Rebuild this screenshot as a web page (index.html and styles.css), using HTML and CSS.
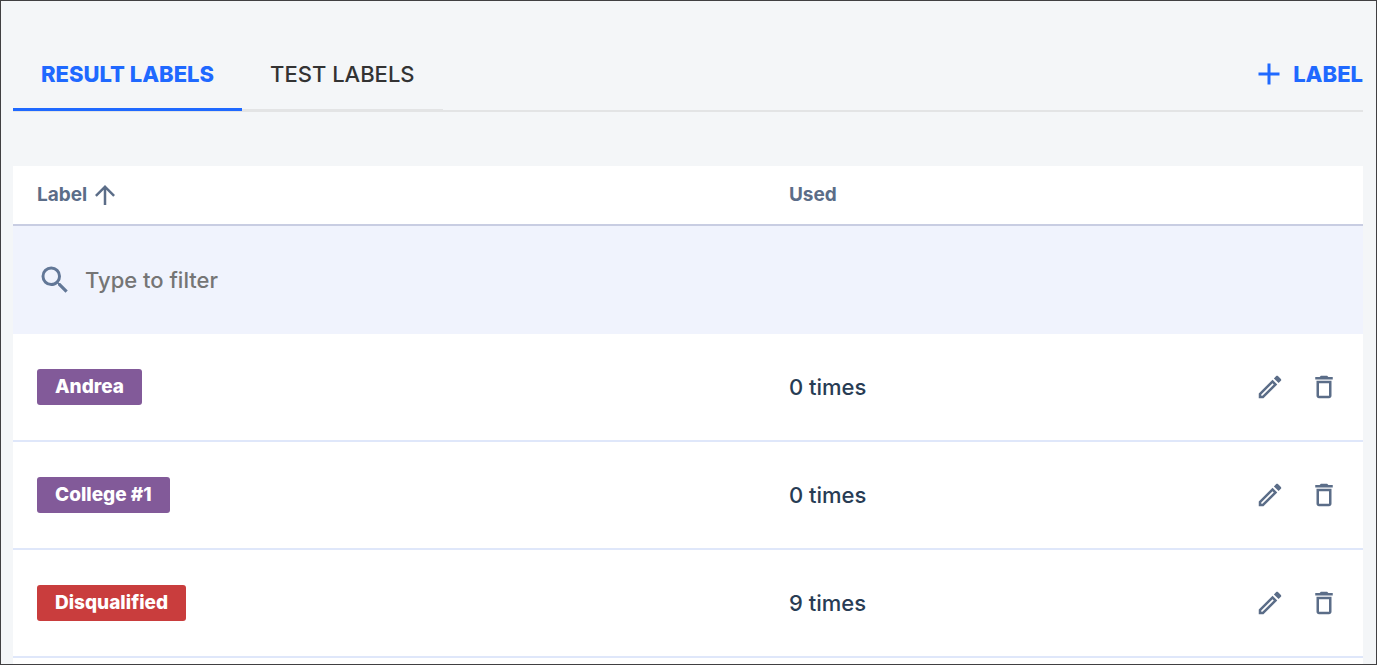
FILE: index.html
```html
<!DOCTYPE html>
<html lang="en">
<head>
  <meta charset="UTF-8">
  <title>Labels</title>
  <link rel="stylesheet" href="styles.css">
</head>
<body>

  <!-- shared icons -->
  <svg class="sprite" aria-hidden="true">
    <symbol id="edit" viewBox="0 0 24 24">
      <path d="M14.06 9.02l.92.92L5.92 19H5v-.92l9.06-9.06M17.66 3c-.25 0-.51.1-.7.29l-1.83 1.83 3.75 3.75 1.83-1.83c.39-.39.39-1.02 0-1.41l-2.34-2.34c-.2-.2-.45-.29-.71-.29zm-3.6 3.19L3 17.25V21h3.75L17.81 9.94l-3.75-3.75z"/>
    </symbol>
    <symbol id="trash" viewBox="0 0 24 24">
      <path d="M6 19c0 1.1.9 2 2 2h8c1.1 0 2-.9 2-2V7H6v12zM8 9h8v10H8V9zm7.5-5l-1-1h-5l-1 1H5v2h14V4z"/>
    </symbol>
  </svg>

  <main class="page">
    <header class="toolbar">
      <nav class="tabs">
        <button class="tab active">RESULT LABELS</button>
        <button class="tab">TEST LABELS</button>
      </nav>
      <button class="add-button">
        <svg class="icon-large" viewBox="0 0 24 24"><path d="M19 13h-6v6h-2v-6H5v-2h6V5h2v6h6v2z"/></svg>
        LABEL
      </button>
    </header>

    <section class="card">
      <table class="labels">
        <thead>
          <tr>
            <th class="col-label">
              <button class="sort">
                Label
                <svg class="icon" viewBox="0 0 24 24"><path d="M4 12l1.41 1.41L11 7.83V20h2V7.83l5.58 5.59L20 12l-8-8-8 8z"/></svg>
              </button>
            </th>
            <th>Used</th>
            <th></th>
          </tr>
        </thead>
        <tbody>
          <tr class="filter-row">
            <td colspan="3">
              <div class="filter">
                <label for="filter" aria-label="Filter labels">
                  <svg class="icon-large" viewBox="0 0 24 24"><path d="M15.5 14h-.79l-.28-.27A6.471 6.471 0 0 0 16 9.5 6.5 6.5 0 1 0 9.5 16c1.61 0 3.09-.59 4.23-1.57l.27.28v.79l5 4.99L20.49 19l-4.99-5zm-6 0C7.01 14 5 11.99 5 9.5S7.01 5 9.5 5 14 7.01 14 9.5 11.99 14 9.5 14z"/></svg>
                </label>
                <input type="text" id="filter" placeholder="Type to filter">
              </div>
            </td>
          </tr>
          <tr>
            <td><span class="tag purple">Andrea</span></td>
            <td>0 times</td>
            <td>
              <div class="actions">
                <button aria-label="Edit"><svg class="icon"><use href="#edit"/></svg></button>
                <button aria-label="Delete"><svg class="icon"><use href="#trash"/></svg></button>
              </div>
            </td>
          </tr>
          <tr>
            <td><span class="tag purple">College #1</span></td>
            <td>0 times</td>
            <td>
              <div class="actions">
                <button aria-label="Edit"><svg class="icon"><use href="#edit"/></svg></button>
                <button aria-label="Delete"><svg class="icon"><use href="#trash"/></svg></button>
              </div>
            </td>
          </tr>
          <tr>
            <td><span class="tag red">Disqualified</span></td>
            <td>9 times</td>
            <td>
              <div class="actions">
                <button aria-label="Edit"><svg class="icon"><use href="#edit"/></svg></button>
                <button aria-label="Delete"><svg class="icon"><use href="#trash"/></svg></button>
              </div>
            </td>
          </tr>
        </tbody>
      </table>
    </section>
  </main>

</body>
</html>
```
FILE: styles.css
```css
* {
  box-sizing: border-box;
}

body {
  margin: 0;
  font-family: Inter, "Open Sans", sans-serif;
  font-size: 22px;
  line-height: 28px;
  color: #283c54;
}

button {
  padding: 0;
  border: none;
  background: none;
  font: inherit;
  color: inherit;
  cursor: pointer;
}

svg {
  display: block;
  fill: currentColor;
}

.sprite {
  position: absolute;
  width: 0;
  height: 0;
}

.icon {
  width: 30px;
  height: 30px;
}

.icon-large {
  width: 36px;
  height: 36px;
}

.page {
  display: flex;
  flex-direction: column;
  min-height: 100vh;
  padding: 36px 13px 0 12px;
  border: 1px solid #414042;
  background-color: #f4f6f8;
}

.toolbar {
  display: flex;
  justify-content: space-between;
  margin-bottom: 54px;
  border-bottom: 2px solid #e3e4e5;
}

.tabs {
  display: flex;
  margin-bottom: -1px;
}

.tab {
  height: 74px;
  padding: 2px 28px 0;
  border-bottom: 2px solid #e3e4e5;
  font-weight: 500;
  color: #333;
}

.tab.active {
  border-bottom: 3px solid #1f69ff;
  font-weight: 800;
  color: #1f69ff;
}

.add-button {
  display: flex;
  align-items: center;
  gap: 6px;
  font-weight: 800;
  color: #1f69ff;
}

.card {
  flex: 1;
  background-color: #fff;
}

.labels {
  width: 100%;
  border-collapse: separate;
  border-spacing: 0;
  table-layout: fixed;
}

.labels th {
  height: 60px;
  padding: 0 24px;
  border-bottom: 2px solid #c8cde2;
  font-size: 19px;
  font-weight: 700;
  text-align: left;
  color: #5b6d88;
}

.col-label {
  width: 55.7%;
}

.labels td {
  height: 108px;
  padding: 0 24px;
  border-bottom: 2px solid #dfe7fa;
  font-weight: 500;
}

.labels .filter-row td {
  border-bottom: none;
  background-color: #f0f3fd;
}

.sort {
  display: flex;
  align-items: center;
  gap: 3px;
}

.filter {
  display: flex;
  align-items: center;
  gap: 12px;
  color: #627797;
}

.filter input {
  flex: 1;
  padding: 0;
  border: none;
  outline: none;
  background: none;
  font: inherit;
}

.filter input::placeholder {
  color: #757575;
}

.tag {
  display: inline-block;
  padding: 4px 18px;
  border-radius: 3px;
  font-size: 19px;
  font-weight: 800;
  color: #fff;
  vertical-align: middle;
}

.purple {
  background-color: #825a99;
}

.red {
  background-color: #c93d3d;
}

.actions {
  display: flex;
  justify-content: flex-end;
  gap: 24px;
  color: #5b6d88;
}
```
